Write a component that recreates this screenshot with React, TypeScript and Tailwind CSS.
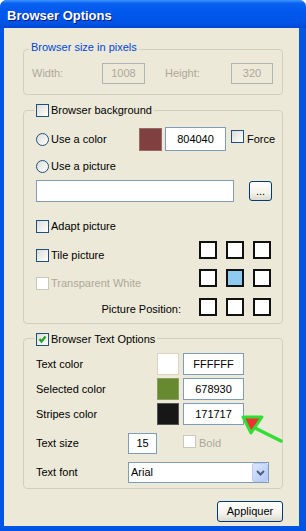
import React from "react";

function Check({ checked, disabled }: { checked?: boolean; disabled?: boolean }) {
  return (
    <span
      className={
        disabled
          ? "relative inline-block w-[13px] h-[13px] shrink-0 border border-[#CAC8BB] bg-white"
          : "relative inline-block w-[13px] h-[13px] shrink-0 border border-[#1C5180] bg-[linear-gradient(135deg,#DCDCD7,#FFFFFF)]"
      }
    >
      {checked && (
        <svg className="absolute left-0 top-0" width="11" height="11" viewBox="0 0 11 11">
          <path d="M2.5 5 L4.5 7.5 L8.5 2.5" fill="none" stroke="#21A121" strokeWidth="2.2" />
        </svg>
      )}
    </span>
  );
}

function Radio() {
  return (
    <span className="inline-block w-[13px] h-[13px] shrink-0 rounded-full border border-[#1C5180] bg-[linear-gradient(135deg,#DCDCD7,#FFFFFF)]" />
  );
}

function XpButton({ children, className }: { children: React.ReactNode; className: string }) {
  return (
    <div
      className={
        "flex items-center justify-center rounded-[3px] border border-[#003C74] bg-[linear-gradient(to_bottom,#FFFFFF,#F4F3EE_60%,#DCD9CC)] text-black text-[11px] " +
        className
      }
    >
      {children}
    </div>
  );
}

export default function App() {
  return (
    <div className="relative w-[306px] h-[531px] bg-[#0055E5] rounded-t-[7px] flex flex-col overflow-hidden font-['Liberation_Sans',Arial,sans-serif] text-[11px] text-black">
      {/* Title bar */}
      <div className="h-[28px] shrink-0 flex items-center pl-[7px] pt-[4px] text-white font-bold text-[13px] bg-[linear-gradient(to_bottom,#3D95FF_0%,#0A62F0_12%,#0058EE_40%,#0055E5_80%,#0048D8_100%)] [text-shadow:1px_1px_#0A1883]">
        Browser Options
      </div>

      {/* Client area */}
      <div className="flex-1 ml-[4px] mr-[7px] mb-[5px] bg-[#ECE9D8] flex flex-col">
        {/* Group 1 */}
        <div className="relative mt-[21px] ml-[19px] w-[260px] h-[46px] shrink-0 border border-[#D0D0BF] rounded-[4px]">
          <span className="absolute left-[5px] top-[-10px] px-[2px] h-[14px] leading-[14px] bg-[#ECE9D8] text-[#0046D5]">
            Browser size in pixels
          </span>
          <div className="flex items-center pt-[13px] pl-[8px]">
            <span className="w-[70px] text-[#ACA899]">Width:</span>
            <div className="w-[43px] h-[21px] border border-[#AFB4B6] flex items-center justify-center text-[#ACA899]">1008</div>
            <span className="ml-[20px] w-[66px] text-[#ACA899]">Height:</span>
            <div className="w-[42px] h-[21px] border border-[#AFB4B6] flex items-center justify-center text-[#ACA899]">320</div>
          </div>
        </div>

        {/* Group 2 */}
        <div className="relative mt-[15px] ml-[19px] w-[260px] h-[214px] shrink-0 border border-[#D0D0BF] rounded-[4px]">
          <span className="absolute left-[10px] top-[-8px] px-[2px] h-[14px] flex items-center gap-[2px] bg-[#ECE9D8]">
            <Check />
            <span>Browser background</span>
          </span>
          <div className="flex flex-col pl-[12px]">
            <div className="mt-[15px] h-[26px] flex items-center">
              <div className="w-[103px] flex items-center gap-[2px]">
                <Radio />
                <span>Use a color</span>
              </div>
              <div className="w-[23px] h-[23px] bg-[#804040] border border-[#9A6A66]" />
              <div className="ml-[3px] w-[61px] h-[24px] border border-[#7F9DB9] bg-white flex items-center justify-center">804040</div>
              <span className="ml-[5px]"><Check /></span>
              <span className="ml-[3px]">Force</span>
            </div>
            <div className="mt-[6px] h-[16px] flex items-center gap-[2px]">
              <Radio />
              <span>Use a picture</span>
            </div>
            <div className="mt-[6px] h-[22px] flex items-center">
              <div className="w-[198px] h-[22px] border border-[#7F9DB9] bg-white" />
              <XpButton className="ml-[15px] w-[23px] h-[20px]">...</XpButton>
            </div>
            <div className="mt-[16px] h-[16px] flex items-center gap-[2px]">
              <Check />
              <span>Adapt picture</span>
            </div>
            <div className="mt-[7px] flex">
              <div className="w-[145px] flex flex-col">
                <div className="mt-[6px] h-[16px] flex items-center gap-[2px]">
                  <Check />
                  <span>Tile picture</span>
                </div>
                <div className="mt-[12px] h-[16px] flex items-center gap-[2px]">
                  <Check disabled />
                  <span className="text-[#ACA899]">Transparent White</span>
                </div>
                <div className="mt-[10px] h-[16px] flex items-center justify-end">Picture Position:</div>
              </div>
              <div className="ml-[18px] grid grid-cols-3 gap-[9px]">
                <div className="w-[18px] h-[18px] border-2 border-[#111111] bg-white" />
                <div className="w-[18px] h-[18px] border-2 border-[#111111] bg-white" />
                <div className="w-[18px] h-[18px] border-2 border-[#111111] bg-white" />
                <div className="w-[18px] h-[18px] border-2 border-[#111111] bg-white" />
                <div className="w-[18px] h-[18px] border-2 border-[#111111] bg-[#8FCBF0]" />
                <div className="w-[18px] h-[18px] border-2 border-[#111111] bg-white" />
                <div className="w-[18px] h-[18px] border-2 border-[#111111] bg-white" />
                <div className="w-[18px] h-[18px] border-2 border-[#111111] bg-white" />
                <div className="w-[18px] h-[18px] border-2 border-[#111111] bg-white" />
              </div>
            </div>
          </div>
        </div>

        {/* Group 3 */}
        <div className="relative mt-[14px] ml-[19px] w-[260px] h-[151px] shrink-0 border border-[#D0D0BF] rounded-[4px]">
          <span className="absolute left-[10px] top-[-7px] px-[2px] h-[14px] flex items-center gap-[2px] bg-[#ECE9D8]">
            <Check checked />
            <span>Browser Text Options</span>
          </span>
          <div className="flex flex-col pl-[12px]">
            <div className="mt-[14px] h-[22px] flex items-center">
              <span className="w-[121px]">Text color</span>
              <div className="w-[22px] h-[22px] bg-white border border-[#D8D4C4]" />
              <div className="ml-[4px] w-[61px] h-[22px] border border-[#7F9DB9] bg-white flex items-center justify-center">FFFFFF</div>
            </div>
            <div className="mt-[3px] h-[22px] flex items-center">
              <span className="w-[121px]">Selected color</span>
              <div className="w-[22px] h-[22px] bg-[#678930] border border-[#8AA060]" />
              <div className="ml-[4px] w-[61px] h-[22px] border border-[#7F9DB9] bg-white flex items-center justify-center">678930</div>
            </div>
            <div className="mt-[3px] h-[22px] flex items-center">
              <span className="w-[121px]">Stripes color</span>
              <div className="w-[22px] h-[22px] bg-[#171717] border border-[#555555]" />
              <div className="ml-[4px] w-[61px] h-[22px] border border-[#7F9DB9] bg-white flex items-center justify-center">171717</div>
            </div>
            <div className="mt-[8px] h-[21px] flex items-center">
              <span className="w-[92px]">Text size</span>
              <div className="w-[29px] h-[21px] border border-[#7F9DB9] bg-white flex items-center justify-center">15</div>
              <span className="ml-[26px]"><Check disabled /></span>
              <span className="ml-[3px] text-[#ACA899]">Bold</span>
            </div>
            <div className="mt-[8px] h-[21px] flex items-center">
              <span className="w-[92px]">Text font</span>
              <div className="w-[141px] h-[21px] border border-[#7F9DB9] bg-white flex items-center">
                <span className="flex-1 pl-[2px]">Arial</span>
                <div className="w-[16px] h-[19px] rounded-[2px] border border-[#B8CCF5] bg-[linear-gradient(135deg,#DCE6FD,#B3C8F7)] flex items-center justify-center">
                  <svg width="9" height="6" viewBox="0 0 9 6">
                    <path d="M1 1 L4.5 4.5 L8 1" fill="none" stroke="#4D6185" strokeWidth="2" />
                  </svg>
                </div>
              </div>
            </div>
          </div>
        </div>

        <div className="flex justify-end mt-[12px] mr-[16px]">
          <XpButton className="w-[66px] h-[21px]">Appliquer</XpButton>
        </div>
      </div>

      {/* Green arrow overlay */}
      <svg className="absolute left-0 top-0 pointer-events-none" width="306" height="531" viewBox="0 0 306 531">
        <line x1="255" y1="428" x2="281" y2="441" stroke="#33DD33" strokeWidth="3.5" strokeLinecap="round" />
        <polygon points="243,417 262,417 251,433" fill="#EE3030" stroke="#33DD33" strokeWidth="3" strokeLinejoin="round" />
      </svg>
    </div>
  );
}
